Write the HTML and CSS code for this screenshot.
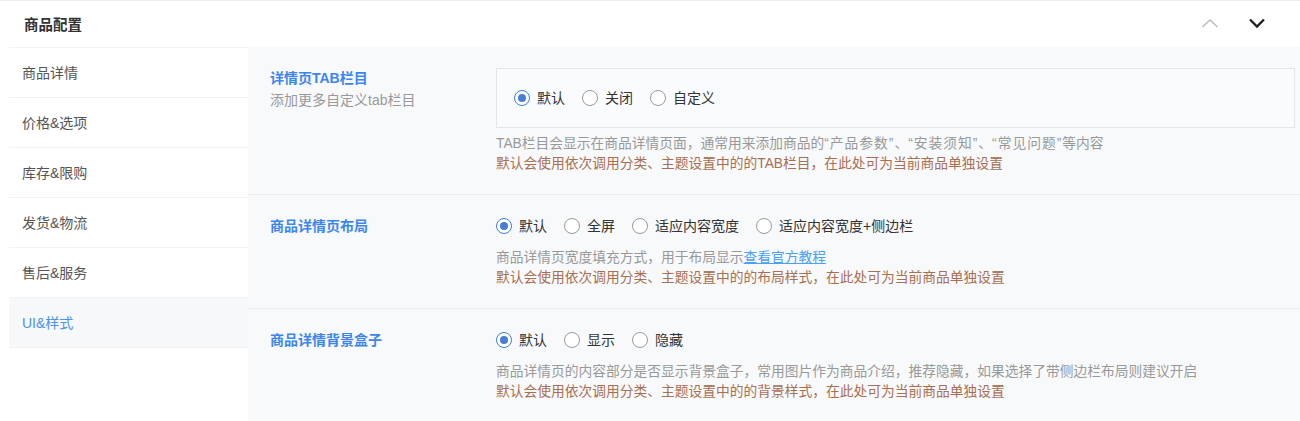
FILE: index.html
```html
<!DOCTYPE html>
<html lang="zh">
<head>
<meta charset="utf-8">
<link rel="stylesheet" href="styles.css">
</head>
<body>
<div class="card">
  <div class="header">
    <div class="header-title">商品配置</div>
    <div class="header-actions">
      <svg class="chev chev-up" width="20" height="12" viewBox="0 0 20 12"><polyline points="2.5,10 10,3 17.5,10" fill="none" stroke="#bcbcbc" stroke-width="1.6"/></svg>
      <svg class="chev chev-down" width="20" height="12" viewBox="0 0 20 12"><polyline points="3,2.5 10,9.5 17,2.5" fill="none" stroke="#1f1f1f" stroke-width="2.3"/></svg>
    </div>
  </div>
  <div class="body">
    <ul class="nav">
      <li class="nav-item">商品详情</li>
      <li class="nav-item">价格&amp;选项</li>
      <li class="nav-item">库存&amp;限购</li>
      <li class="nav-item">发货&amp;物流</li>
      <li class="nav-item">售后&amp;服务</li>
      <li class="nav-item active">UI&amp;样式</li>
    </ul>
    <div class="panel">
      <div class="section">
        <div class="label">
          <div class="label-title">详情页TAB栏目</div>
          <div class="label-sub">添加更多自定义tab栏目</div>
        </div>
        <div class="content">
          <div class="box">
            <div class="radios">
              <span class="radio checked"><i class="dot"></i>默认</span>
              <span class="radio"><i class="dot"></i>关闭</span>
              <span class="radio"><i class="dot"></i>自定义</span>
            </div>
          </div>
          <div class="desc desc-tight">
            <div class="desc-gray">TAB栏目会显示在商品详情页面，通常用来添加商品的<span class="q">“产品参数”</span>、<span class="q">“安装须知”</span>、<span class="q">“常见问题”</span>等内容</div>
            <div class="desc-warn">默认会使用依次调用分类、主题设置中的的TAB栏目，在此处可为当前商品单独设置</div>
          </div>
        </div>
      </div>
      <div class="section">
        <div class="label">
          <div class="label-title">商品详情页布局</div>
        </div>
        <div class="content">
          <div class="radios">
            <span class="radio checked"><i class="dot"></i>默认</span>
            <span class="radio"><i class="dot"></i>全屏</span>
            <span class="radio"><i class="dot"></i>适应内容宽度</span>
            <span class="radio"><i class="dot"></i>适应内容宽度+侧边栏</span>
          </div>
          <div class="desc">
            <div class="desc-gray">商品详情页宽度填充方式，用于布局显示<a class="link">查看官方教程</a></div>
            <div class="desc-warn">默认会使用依次调用分类、主题设置中的的布局样式，在此处可为当前商品单独设置</div>
          </div>
        </div>
      </div>
      <div class="section last">
        <div class="label">
          <div class="label-title">商品详情背景盒子</div>
        </div>
        <div class="content">
          <div class="radios">
            <span class="radio checked"><i class="dot"></i>默认</span>
            <span class="radio"><i class="dot"></i>显示</span>
            <span class="radio"><i class="dot"></i>隐藏</span>
          </div>
          <div class="desc">
            <div class="desc-gray">商品详情页的内容部分是否显示背景盒子，常用图片作为商品介绍，推荐隐藏，如果选择了带侧边栏布局则建议开启</div>
            <div class="desc-warn">默认会使用依次调用分类、主题设置中的的背景样式，在此处可为当前商品单独设置</div>
          </div>
        </div>
      </div>
    </div>
  </div>
</div>
</body>
</html>
```
FILE: styles.css
```css
* { box-sizing: border-box; }
html, body { margin: 0; padding: 0; background: #fff; }
body {
  font-family: "Liberation Sans", "Noto Sans CJK SC", sans-serif;
  font-size: 14px;
  color: #333;
}
.card {
  border-top: 1px solid #ededed;
  background: #fff;
}
.header {
  height: 46px;
  display: flex;
  align-items: center;
  justify-content: space-between;
  padding: 0 33px 0 24px;
}
.header-title {
  font-size: 14.5px;
  font-weight: 700;
  color: #333;
  margin-top: -2px;
}
.header-actions {
  display: flex;
  align-items: center;
  gap: 27px;
  margin-top: -2px;
}
.chev { display: block; }
.body {
  display: flex;
  align-items: stretch;
  min-height: 374px;
}
.nav {
  list-style: none;
  margin: 0 0 0 9px;
  padding: 0;
  width: 239px;
  border-top: 1px solid #f1f2f4;
}
.nav-item {
  height: 50px;
  line-height: 50px;
  border-bottom: 1px solid #f1f2f4;
  padding-left: 13px;
  color: #555;
  font-size: 14px;
}
.nav-item.active {
  background: #f7f8fa;
  color: #4b90f2;
}
.panel {
  flex: 1;
  background: #f8f9fb;
}
.section {
  display: flex;
  padding: 20px 5px 20px 22px;
  border-bottom: 1px solid #ececef;
}
.section.last { border-bottom: none; }
.label {
  width: 226px;
  flex-shrink: 0;
  line-height: 22px;
}
.label-title {
  color: #3a86ee;
  font-weight: 700;
  font-size: 14px;
}
.label-sub {
  color: #999;
  font-size: 14px;
}
.content { flex: 1; }
.box {
  margin-top: 1px;
  height: 60px;
  border: 1px solid #e4e6ea;
  background: #fafbfc;
  padding: 0 17px;
  display: flex;
  align-items: center;
}
.radios {
  display: flex;
  align-items: center;
  gap: 17px;
  height: 22px;
}
.radio {
  display: inline-flex;
  align-items: center;
  line-height: 22px;
  color: #333;
  font-size: 14px;
}
.dot {
  width: 16px;
  height: 16px;
  border-radius: 50%;
  border: 1px solid #9a9a9a;
  background: #fff;
  margin-right: 7px;
  display: inline-flex;
  align-items: center;
  justify-content: center;
}
.radio.checked .dot {
  border-color: #3d7fd8;
}
.radio.checked .dot::after {
  content: "";
  width: 8px;
  height: 8px;
  border-radius: 50%;
  background: #4a7fcf;
}
.desc {
  margin-top: 11px;
  line-height: 20px;
  font-size: 13.75px;
}
.desc.desc-tight { margin-top: 6px; }
.desc-gray { color: #999; }
.desc-warn { color: #a86f52; }
.q { letter-spacing: 1px; }
.link {
  color: #4aa0f5;
  text-decoration: underline;
}
```
